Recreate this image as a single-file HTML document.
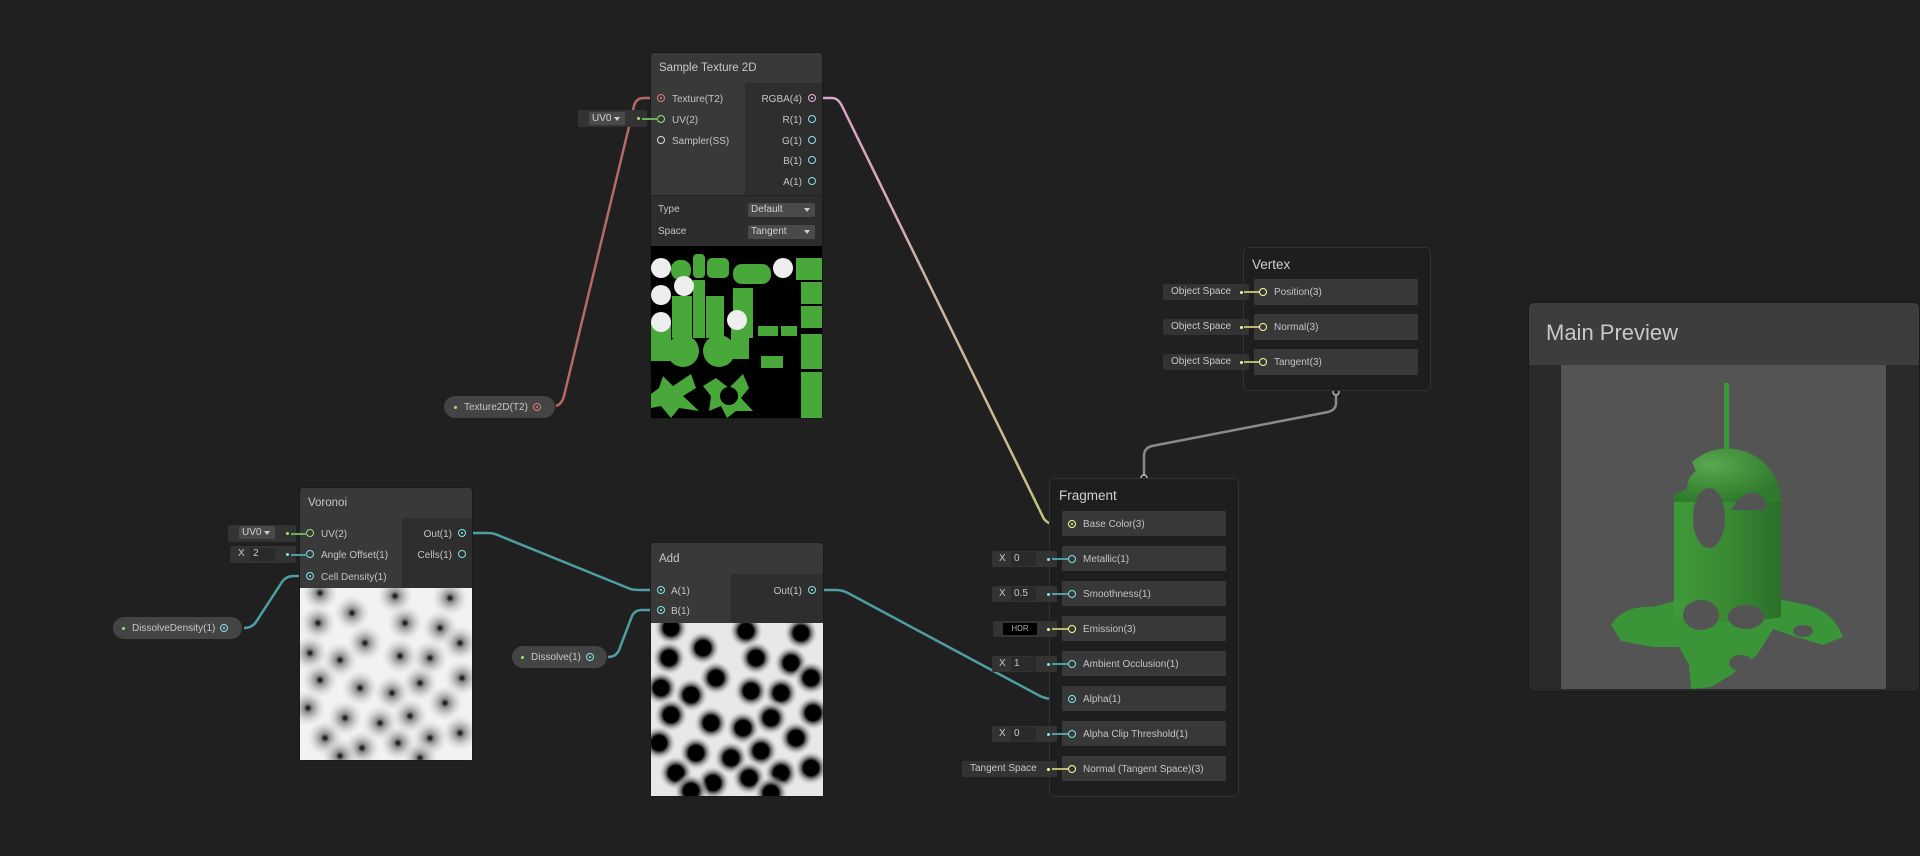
<!DOCTYPE html>
<html><head><meta charset="utf-8"><style>
*{margin:0;padding:0;box-sizing:border-box}
body{width:1920px;height:856px;background:#202020;position:relative;overflow:hidden;font-family:"Liberation Sans",sans-serif;color:#c4c4c4;font-size:10px}
.a{position:absolute}
.node{position:absolute;background:#2d2d2d;border-radius:3px;overflow:hidden;box-shadow:0 0 0 1px #1a1a1a}
.hdr{position:absolute;left:0;right:0;top:0;background:#393939;color:#c8c8c8;font-size:11.5px;padding-left:8px;display:flex;align-items:center}
.p{position:absolute;width:8px;height:8px;border:1.5px solid;border-radius:50%}
.p.f::after{content:"";position:absolute;left:1.5px;top:1.5px;width:2px;height:2px;border-radius:50%;background:currentColor}
.lbl{position:absolute;font-size:10px;line-height:13px;white-space:nowrap}
.fld{position:absolute;background:#333;border-radius:2px;font-size:10px;color:#c8c8c8}
.pill{position:absolute;background:#444;border-radius:11px;font-size:10px;color:#c8c8c8;display:flex;align-items:center}
.row{position:absolute;background:#383838;left:1062px;width:164px;height:25px}
.vrow{position:absolute;background:#383838;left:1254px;width:164px;height:26px}
.dd{position:absolute;background:#4a4a4a;border-radius:2px;font-size:10px;padding-left:3px;line-height:13px;color:#d0d0d0}
.dd::after{content:"";position:absolute;right:5px;top:5px;border-left:3px solid transparent;border-right:3px solid transparent;border-top:4px solid #ccc}
.sm{position:absolute;width:3px;height:3px;border-radius:50%}
.st{position:absolute;height:2px}
</style></head><body>

<svg class="a" style="left:0;top:0" width="1920" height="856">
<defs><linearGradient id="g1" x1="0" y1="0" x2="0" y2="1"><stop offset="0" stop-color="#d9a3c6"/><stop offset="1" stop-color="#c4c27e"/></linearGradient></defs>
<g fill="none" stroke-width="2.5">
<path d="M556 406 Q562 404 564 396 L634 106 Q636 98 644 98 L661 98" stroke="#b56a6a"/>
<path d="M822 98 L832 98 Q838 98 842 106 L1044 519 Q1048 524 1054 524 L1068 524" stroke="url(#g1)"/>
<path d="M472 533 L488 533 Q494 533 500 536 L628 588 Q632 590 640 590 L656 590" stroke="#4e9ea2"/>
<path d="M244 628 Q252 628 256 622 L282 582 Q286 576 294 576 L306 576" stroke="#4e9ea2"/>
<path d="M608 657 Q616 657 619 650 L632 616 Q635 610 642 610 L656 610" stroke="#4e9ea2"/>
<path d="M823 590 L836 590 Q842 590 848 593 L1040 696 Q1046 699 1054 699 L1068 699" stroke="#4e9ea2"/>
<path d="M1336 394 L1336 403 Q1336 410 1328 412 L1152 446 Q1144 448 1144 456 L1144 475" stroke="#8a8a8a"/>
</g>
<circle cx="1336" cy="392" r="3" fill="#202020" stroke="#bbb" stroke-width="1.5"/>
<circle cx="1144" cy="478" r="3" fill="#202020" stroke="#bbb" stroke-width="1.5"/>
</svg>

<!-- Sample Texture 2D -->
<div class="node" style="left:651px;top:53px;width:171px;height:365px">
 <div class="hdr" style="height:30px">Sample Texture 2D</div>
 <div class="a" style="left:0;top:30px;width:94px;height:112px;background:#393939"></div>
 <div class="a" style="left:94px;top:30px;width:77px;height:112px;background:#2e2e2e"></div>
 <div class="a" style="left:0;top:142px;width:171px;height:51px;background:#2d2d2d;border-top:1px solid #222"></div>
</div>
<div class="p f" style="left:657px;top:94px;color:#e27a7a"></div><div class="lbl" style="left:672px;top:93px">Texture(T2)</div>
<div class="p" style="left:657px;top:115px;color:#9de07a"></div><div class="lbl" style="left:672px;top:114px">UV(2)</div>
<div class="p" style="left:657px;top:136px;color:#ddd"></div><div class="lbl" style="left:672px;top:135px">Sampler(SS)</div>
<div class="lbl" style="left:752px;top:93px;width:50px;text-align:right">RGBA(4)</div><div class="p f" style="left:808px;top:94px;color:#e5b7e0"></div>
<div class="lbl" style="left:752px;top:114px;width:50px;text-align:right">R(1)</div><div class="p" style="left:808px;top:115px;color:#84e4e7"></div>
<div class="lbl" style="left:752px;top:135px;width:50px;text-align:right">G(1)</div><div class="p" style="left:808px;top:136px;color:#84e4e7"></div>
<div class="lbl" style="left:752px;top:155px;width:50px;text-align:right">B(1)</div><div class="p" style="left:808px;top:156px;color:#84e4e7"></div>
<div class="lbl" style="left:752px;top:176px;width:50px;text-align:right">A(1)</div><div class="p" style="left:808px;top:177px;color:#84e4e7"></div>
<div class="lbl" style="left:658px;top:203px">Type</div><div class="dd" style="left:748px;top:203px;width:67px;height:14px">Default</div>
<div class="lbl" style="left:658px;top:225px">Space</div><div class="dd" style="left:748px;top:225px;width:67px;height:14px">Tangent</div>
<svg class="a" style="left:651px;top:246px" width="171" height="172" viewBox="0 0 171 172">
<rect width="171" height="172" fill="#000"/>
<g fill="#49a83a">
<rect x="20" y="14" width="20" height="20" rx="9"/><rect x="42" y="8" width="12" height="24" rx="4"/><rect x="56" y="12" width="22" height="20" rx="5"/><rect x="82" y="18" width="38" height="20" rx="9"/><rect x="145" y="12" width="26" height="22"/><rect x="150" y="36" width="21" height="22"/><rect x="150" y="60" width="21" height="22"/>
<rect x="42" y="34" width="12" height="58"/><rect x="21" y="50" width="20" height="42"/><rect x="55" y="50" width="18" height="42"/><rect x="82" y="42" width="20" height="50"/><rect x="0" y="75" width="20" height="40"/><rect x="80" y="73" width="18" height="40"/><circle cx="32" cy="105" r="16"/><circle cx="68" cy="105" r="16"/><rect x="107" y="80" width="20" height="10"/><rect x="130" y="80" width="16" height="10"/>
<rect x="150" y="88" width="21" height="35"/><rect x="150" y="126" width="21" height="46"/><rect x="110" y="110" width="22" height="12"/>
<path d="M12 130 L22 140 L40 128 L45 142 L32 150 L48 165 L28 162 L20 172 L10 160 L0 162 L0 148 L8 142 Z"/>
<path d="M65 132 L78 142 L92 128 L98 142 L90 152 L102 165 L85 165 L76 172 L70 160 L58 165 L60 150 L52 140 Z"/>
</g>
<circle cx="78" cy="150" r="9" fill="#000"/>
<g fill="#eee"><circle cx="10" cy="22" r="10"/><circle cx="10" cy="49" r="10"/><circle cx="33" cy="40" r="10"/><circle cx="10" cy="76" r="10"/><circle cx="86" cy="74" r="10"/><circle cx="132" cy="22" r="10"/></g>
</svg>
<div class="fld" style="left:578px;top:110px;width:69px;height:17px"></div>
<div class="dd" style="left:589px;top:112px;width:36px;height:13px">UV0</div>
<div class="sm" style="left:637px;top:117px;background:#9de07a"></div>
<div class="st" style="left:642px;top:118px;width:16px;background:#6bb05a"></div>

<div class="pill" style="left:444px;top:396px;width:111px;height:22px"><span style="margin-left:10px;width:3px;height:3px;border-radius:50%;background:#9de07a"></span><span style="margin-left:7px">Texture2D(T2)</span></div>
<div class="p f" style="left:533px;top:403px;color:#e27a7a"></div>

<!-- Voronoi -->
<div class="node" style="left:300px;top:488px;width:172px;height:272px">
 <div class="hdr" style="height:30px">Voronoi</div>
 <div class="a" style="left:0;top:30px;width:102px;height:70px;background:#393939"></div>
 <div class="a" style="left:102px;top:30px;width:70px;height:70px;background:#2e2e2e"></div>
</div>
<div class="p" style="left:306px;top:529px;color:#9de07a"></div><div class="lbl" style="left:321px;top:528px">UV(2)</div>
<div class="p" style="left:306px;top:550px;color:#84e4e7"></div><div class="lbl" style="left:321px;top:549px">Angle Offset(1)</div>
<div class="p f" style="left:306px;top:572px;color:#84e4e7"></div><div class="lbl" style="left:321px;top:571px">Cell Density(1)</div>
<div class="lbl" style="left:410px;top:528px;width:42px;text-align:right">Out(1)</div><div class="p f" style="left:458px;top:529px;color:#84e4e7"></div>
<div class="lbl" style="left:410px;top:549px;width:42px;text-align:right">Cells(1)</div><div class="p" style="left:458px;top:550px;color:#84e4e7"></div>
<div class="fld" style="left:228px;top:525px;width:68px;height:17px"></div>
<div class="dd" style="left:239px;top:526px;width:36px;height:13px">UV0</div>
<div class="sm" style="left:286px;top:532px;background:#9de07a"></div><div class="st" style="left:291px;top:533px;width:16px;background:#6bb05a"></div>
<div class="fld" style="left:230px;top:546px;width:66px;height:17px"><span style="position:absolute;left:8px;top:2px">X</span><div class="a" style="left:20px;top:2px;width:25px;height:13px;background:#2a2a2a;padding-left:3px">2</div></div>
<div class="sm" style="left:286px;top:553px;background:#84e4e7"></div><div class="st" style="left:291px;top:554px;width:16px;background:#4e9ea2"></div>
<div class="pill" style="left:113px;top:617px;width:129px;height:22px"><span style="margin-left:9px;width:3px;height:3px;border-radius:50%;background:#9de07a"></span><span style="margin-left:7px">DissolveDensity(1)</span></div>
<div class="p f" style="left:220px;top:624px;color:#84e4e7"></div>

<!-- Add -->
<div class="node" style="left:651px;top:543px;width:172px;height:253px">
 <div class="hdr" style="height:31px">Add</div>
 <div class="a" style="left:0;top:31px;width:80px;height:49px;background:#393939"></div>
 <div class="a" style="left:80px;top:31px;width:92px;height:49px;background:#2e2e2e"></div>
</div>
<div class="p f" style="left:657px;top:586px;color:#84e4e7"></div><div class="lbl" style="left:671px;top:585px">A(1)</div>
<div class="p f" style="left:657px;top:606px;color:#84e4e7"></div><div class="lbl" style="left:671px;top:605px">B(1)</div>
<div class="lbl" style="left:760px;top:585px;width:42px;text-align:right">Out(1)</div><div class="p f" style="left:808px;top:586px;color:#84e4e7"></div>
<div class="pill" style="left:512px;top:646px;width:95px;height:22px"><span style="margin-left:9px;width:3px;height:3px;border-radius:50%;background:#9de07a"></span><span style="margin-left:7px">Dissolve(1)</span></div>
<div class="p f" style="left:586px;top:653px;color:#84e4e7"></div>

<svg width="0" height="0" class="a"><defs>
<radialGradient id="vd"><stop offset="0" stop-color="#111"/><stop offset="0.1" stop-color="#333"/><stop offset="0.22" stop-color="#888"/><stop offset="0.6" stop-color="#bbb" stop-opacity="0.6"/><stop offset="1" stop-color="#ddd" stop-opacity="0"/></radialGradient>
<radialGradient id="ad"><stop offset="0" stop-color="#000"/><stop offset="0.42" stop-color="#000"/><stop offset="0.5" stop-color="#444"/><stop offset="1" stop-color="#fff" stop-opacity="0"/></radialGradient>
<g id="pts">
<circle cx="20" cy="5" r="18"/><circle cx="52" cy="25" r="18"/><circle cx="95" cy="8" r="18"/><circle cx="150" cy="10" r="18"/><circle cx="18" cy="35" r="18"/><circle cx="65" cy="55" r="18"/><circle cx="105" cy="35" r="18"/><circle cx="140" cy="40" r="18"/>
<circle cx="10" cy="65" r="18"/><circle cx="40" cy="72" r="18"/><circle cx="100" cy="68" r="18"/><circle cx="160" cy="55" r="18"/><circle cx="130" cy="70" r="18"/>
<circle cx="20" cy="92" r="18"/><circle cx="60" cy="100" r="18"/><circle cx="92" cy="105" r="18"/><circle cx="120" cy="95" r="18"/><circle cx="162" cy="90" r="18"/>
<circle cx="8" cy="120" r="18"/><circle cx="45" cy="130" r="18"/><circle cx="80" cy="135" r="18"/><circle cx="110" cy="128" r="18"/><circle cx="145" cy="115" r="18"/>
<circle cx="25" cy="150" r="18"/><circle cx="62" cy="160" r="18"/><circle cx="98" cy="155" r="18"/><circle cx="130" cy="150" r="18"/><circle cx="160" cy="145" r="18"/><circle cx="40" cy="168" r="18"/><circle cx="120" cy="170" r="18"/>
</g></defs></svg>
<svg class="a" style="left:300px;top:588px" width="172" height="172"><rect width="172" height="172" fill="#f2f2f2"/><g fill="url(#vd)"><use href="#pts"/></g></svg>
<svg class="a" style="left:651px;top:623px" width="172" height="173"><rect width="172" height="173" fill="#e8e8e8"/><g fill="url(#ad)"><use href="#pts"/></g></svg>

<!-- Vertex -->
<div class="a" style="left:1243px;top:247px;width:188px;height:144px;background:#1e1e1e;border:1px solid #333;border-radius:5px"></div>
<div class="a" style="left:1252px;top:257px;font-size:13.5px;color:#d0d0d0">Vertex</div>
<div class="vrow" style="top:279px"></div><div class="vrow" style="top:314px"></div><div class="vrow" style="top:349px"></div>
<div class="lbl" style="left:1274px;top:286px">Position(3)</div>
<div class="lbl" style="left:1274px;top:321px">Normal(3)</div>
<div class="lbl" style="left:1274px;top:356px">Tangent(3)</div>
<div class="fld" style="left:1163px;top:284px;width:86px;height:16px;line-height:16px;padding-left:8px">Object Space</div>
<div class="fld" style="left:1163px;top:319px;width:86px;height:16px;line-height:16px;padding-left:8px">Object Space</div>
<div class="fld" style="left:1163px;top:354px;width:86px;height:16px;line-height:16px;padding-left:8px">Object Space</div>
<div class="sm" style="left:1240px;top:291px;background:#f6ff9a"></div><div class="st" style="left:1244px;top:291px;width:16px;background:#b8b870"></div><div class="p" style="left:1259px;top:288px;color:#f6ff9a"></div>
<div class="sm" style="left:1240px;top:326px;background:#f6ff9a"></div><div class="st" style="left:1244px;top:326px;width:16px;background:#b8b870"></div><div class="p" style="left:1259px;top:323px;color:#f6ff9a"></div>
<div class="sm" style="left:1240px;top:361px;background:#f6ff9a"></div><div class="st" style="left:1244px;top:361px;width:16px;background:#b8b870"></div><div class="p" style="left:1259px;top:358px;color:#f6ff9a"></div>

<!-- Fragment -->
<div class="a" style="left:1049px;top:478px;width:190px;height:319px;background:#1e1e1e;border:1px solid #333;border-radius:5px"></div>
<div class="a" style="left:1059px;top:488px;font-size:13.5px;color:#d0d0d0">Fragment</div>
<div class="row" style="top:511px"></div><div class="row" style="top:546px"></div><div class="row" style="top:581px"></div><div class="row" style="top:616px"></div><div class="row" style="top:651px"></div><div class="row" style="top:686px"></div><div class="row" style="top:721px"></div><div class="row" style="top:756px"></div>
<div class="lbl" style="left:1083px;top:518px">Base Color(3)</div>
<div class="lbl" style="left:1083px;top:553px">Metallic(1)</div>
<div class="lbl" style="left:1083px;top:588px">Smoothness(1)</div>
<div class="lbl" style="left:1083px;top:623px">Emission(3)</div>
<div class="lbl" style="left:1083px;top:658px">Ambient Occlusion(1)</div>
<div class="lbl" style="left:1083px;top:693px">Alpha(1)</div>
<div class="lbl" style="left:1083px;top:728px">Alpha Clip Threshold(1)</div>
<div class="lbl" style="left:1083px;top:763px">Normal (Tangent Space)(3)</div>
<div class="p f" style="left:1068px;top:520px;color:#f6ff9a"></div>
<div class="p f" style="left:1068px;top:695px;color:#84e4e7"></div>
<div class="fld" style="left:992px;top:551px;width:65px;height:16px"><span class="a" style="left:7px;top:2px">X</span><div class="a" style="left:19px;top:1px;width:25px;height:14px;background:#2a2a2a;padding:1px 3px">0</div></div>
<div class="sm" style="left:1047px;top:558px;background:#84e4e7"></div><div class="st" style="left:1052px;top:558px;width:16px;background:#4e9ea2"></div><div class="p" style="left:1068px;top:555px;color:#84e4e7"></div>
<div class="fld" style="left:992px;top:586px;width:65px;height:16px"><span class="a" style="left:7px;top:2px">X</span><div class="a" style="left:19px;top:1px;width:25px;height:14px;background:#2a2a2a;padding:1px 3px">0.5</div></div>
<div class="sm" style="left:1047px;top:593px;background:#84e4e7"></div><div class="st" style="left:1052px;top:593px;width:16px;background:#4e9ea2"></div><div class="p" style="left:1068px;top:590px;color:#84e4e7"></div>
<div class="fld" style="left:993px;top:621px;width:64px;height:16px"><div class="a" style="left:10px;top:2px;width:34px;height:12px;background:#000;color:#aaa;font-size:8px;text-align:center;line-height:12px">HDR</div></div>
<div class="sm" style="left:1047px;top:628px;background:#f6ff9a"></div><div class="st" style="left:1052px;top:628px;width:16px;background:#b8b870"></div><div class="p" style="left:1068px;top:625px;color:#f6ff9a"></div>
<div class="fld" style="left:992px;top:656px;width:65px;height:16px"><span class="a" style="left:7px;top:2px">X</span><div class="a" style="left:19px;top:1px;width:25px;height:14px;background:#2a2a2a;padding:1px 3px">1</div></div>
<div class="sm" style="left:1047px;top:663px;background:#84e4e7"></div><div class="st" style="left:1052px;top:663px;width:16px;background:#4e9ea2"></div><div class="p" style="left:1068px;top:660px;color:#84e4e7"></div>
<div class="fld" style="left:992px;top:726px;width:65px;height:16px"><span class="a" style="left:7px;top:2px">X</span><div class="a" style="left:19px;top:1px;width:25px;height:14px;background:#2a2a2a;padding:1px 3px">0</div></div>
<div class="sm" style="left:1047px;top:733px;background:#84e4e7"></div><div class="st" style="left:1052px;top:733px;width:16px;background:#4e9ea2"></div><div class="p" style="left:1068px;top:730px;color:#84e4e7"></div>
<div class="fld" style="left:962px;top:761px;width:95px;height:16px;line-height:16px;padding-left:8px">Tangent Space</div>
<div class="sm" style="left:1047px;top:768px;background:#f6ff9a"></div><div class="st" style="left:1052px;top:768px;width:16px;background:#b8b870"></div><div class="p" style="left:1068px;top:765px;color:#f6ff9a"></div>

<!-- Main Preview -->
<div class="a" style="left:1528px;top:302px;width:392px;height:390px;background:#2a2a2a;border:1px solid #1a1a1a;border-radius:6px;overflow:hidden">
 <div class="a" style="left:0;top:0;width:392px;height:62px;background:#3d3d3d"></div>
 <div class="a" style="left:17px;top:17px;font-size:22px;color:#c8c8c8">Main Preview</div>
 <svg class="a" style="left:32px;top:62px" width="325" height="324" viewBox="0 0 325 324">
  <rect width="325" height="324" fill="#545454"/>
  <defs><linearGradient id="gc" x1="0" x2="1"><stop offset="0" stop-color="#3f9a3a"/><stop offset="0.5" stop-color="#3a8a34"/><stop offset="1" stop-color="#2c6e2a"/></linearGradient>
  <radialGradient id="gd" cx="0.35" cy="0.3" r="0.7"><stop offset="0" stop-color="#5aa850"/><stop offset="1" stop-color="#2f7a2c"/></radialGradient></defs>
  <rect x="163" y="18" width="5" height="66" fill="#3a9a36"/>
  <path d="M50 260 Q62 240 92 242 L135 230 L200 230 L246 240 Q272 246 282 272 L262 280 L235 272 L212 264 L196 290 L170 310 L150 322 L130 324 L128 300 L118 282 L92 282 L60 276 Z" fill="#3a9438"/>
  <path d="M113 252 L113 137 A53.5 53.5 0 0 1 220 137 L220 252 Q166 262 113 252 Z" fill="url(#gc)"/>
  <path d="M113 137 A53.5 53.5 0 0 1 220 137 L113 137 Z" fill="url(#gd)"/>
  <ellipse cx="148" cy="153" rx="16" ry="30" fill="#545454"/>
  <path d="M170 145 Q183 122 200 130 Q206 136 205 145 Z" fill="#545454"/>
  <path d="M113 118 Q117 96 130 95 L135 106 Q126 112 126 124 L113 130 Z" fill="#545454"/>
  <ellipse cx="140" cy="250" rx="18" ry="15" fill="#545454"/>
  <ellipse cx="185" cy="252" rx="18" ry="12" fill="#545454"/>
  <ellipse cx="180" cy="298" rx="12" ry="8" fill="#545454"/>
  <ellipse cx="242" cy="266" rx="10" ry="6" fill="#545454"/>
 </svg>
</div>
</body></html>
